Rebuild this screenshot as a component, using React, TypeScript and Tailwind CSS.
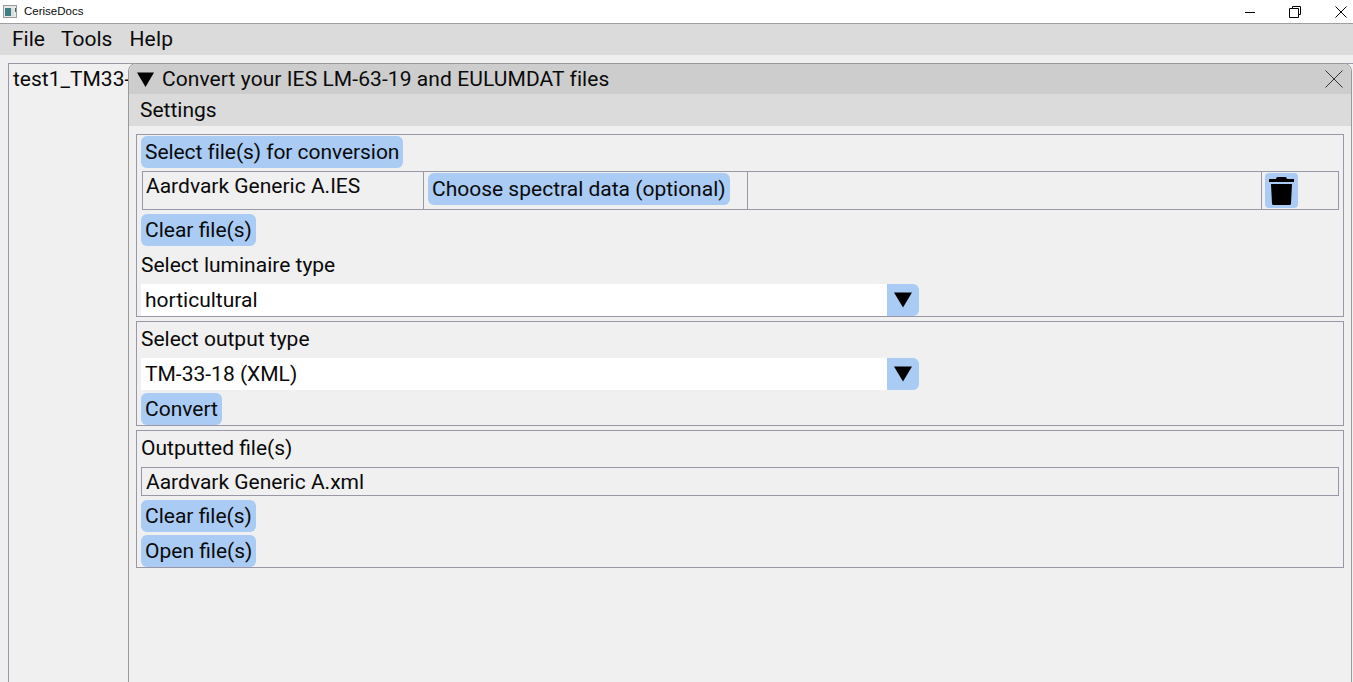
import React from 'react';

const BORDER = 'border border-[#9a98a8]';

function Btn({ children, className = '' }: { children: React.ReactNode; className?: string }) {
  return (
    <div className={`flex h-[32px] w-fit items-center rounded-[6px] bg-[#a9cbf4] px-[4px] whitespace-nowrap ${className}`}>
      {children}
    </div>
  );
}

function Combo({ value }: { value: string }) {
  return (
    <div className="flex h-[32px] w-[778px]">
      <div className="flex flex-1 items-center bg-white px-[4px]">{value}</div>
      <div className="flex w-[32px] items-center justify-center rounded-r-[6px] bg-[#a9cbf4]">
        <svg width="18" height="16" viewBox="0 0 18 16">
          <path d="M0 0.5H18L9 15.5Z" fill="#000" />
        </svg>
      </div>
    </div>
  );
}

function TrashIcon() {
  return (
    <svg width="25" height="28" viewBox="0 0 25 28">
      <path d="M7 2Q7 0 9 0H16Q18 0 18 2H25V5H0V2Z" fill="#000" />
      <path d="M2 7H23L22 26.500Q22 28 20.500 28H4.500Q3 28 3 26.500Z" fill="#000" />
    </svg>
  );
}

export default function App() {
  return (
    <div className="relative flex h-[682px] w-[1353px] flex-col overflow-hidden bg-[#efefef] font-['Roboto',sans-serif] text-[21px] leading-none text-[#0a0a0a]">
      {/* windows chrome */}
      <div className="flex h-[24px] shrink-0 items-center border-b border-[#a0a0a0] bg-white pl-[3px] font-['Liberation_Sans',sans-serif] text-[11.500px]">
        <svg width="14" height="13" viewBox="0 0 14 13" className="mr-[7px]">
          <rect x="0.500" y="0.500" width="13" height="12" fill="#e8e8e8" stroke="#9a9a9a" />
          <rect x="2" y="3" width="6" height="8" fill="#3f7d85" />
          <rect x="8" y="3" width="3" height="8" fill="#d5dfe0" />
          <rect x="12" y="3" width="1" height="4" fill="#555" />
        </svg>
        CeriseDocs
        <div className="ml-auto flex items-center">
          <svg width="12" height="12" viewBox="0 0 12 12" className="mr-[33px]">
            <path d="M1 6.500H11" stroke="#000" />
          </svg>
          <svg width="12" height="12" viewBox="0 0 12 12" className="mr-[34px]">
            <path d="M3.500 2.500V0.500H11.500V8.500H9.500M0.500 2.500H9.500V11.500H0.500Z" fill="none" stroke="#000" />
          </svg>
          <svg width="12" height="12" viewBox="0 0 12 12" className="mr-[6px]">
            <path d="M0.500 0.500L11.500 11.500M11.500 0.500L0.500 11.500" stroke="#000" />
          </svg>
        </div>
      </div>

      {/* main menu */}
      <div className="flex h-[31px] shrink-0 items-center gap-[16px] bg-[#dbdbdb] pl-[12px]">
        <span>File</span>
        <span>Tools</span>
        <span className="ml-[1px] tracking-[0.2px]">Help</span>
      </div>

      {/* doc panel behind the window */}
      <div className="ml-[8px] mt-[8px] flex-1 border-l border-t border-[#9a98a8] bg-[#f0f0f0] pl-[4px] pt-[5px]">
        test1_TM33-
      </div>

      {/* floating converter window */}
      <div className="absolute left-[128px] top-[63px] flex h-[640px] w-[1224px] flex-col rounded-t-[8px] border border-[#9a9a9a] bg-[#f0f0f0]">
        <div className="flex h-[30px] shrink-0 items-center rounded-t-[8px] bg-[#cdcdcd] pl-[8px]">
          <svg width="17" height="15" viewBox="0 0 17 15" className="mr-[8px]">
            <path d="M0 0.500H17L8.500 15Z" fill="#000" />
          </svg>
          <span className="tracking-[0.08px]">Convert your IES LM-63-19 and EULUMDAT files</span>
          <svg width="18" height="18" viewBox="0 0 18 18" className="ml-auto mr-[8px]">
            <path d="M0.500 0.500L17.500 17.500M17.500 0.500L0.500 17.500" stroke="#333" strokeWidth="1" />
          </svg>
        </div>
        <div className="flex h-[32px] shrink-0 items-center bg-[#dbdbdb] pl-[11px]">Settings</div>

        <div className="flex flex-col gap-[4px] px-[7px] pt-[8px]">
          {/* input section */}
          <div className={`flex h-[183px] w-[1208px] flex-col ${BORDER} pl-[4px] pt-[1px]`}>
            <Btn className="tracking-[-0.06px]">Select file(s) for conversion</Btn>
            <div className={`ml-[1px] mt-[3px] flex h-[39px] w-[1197px] ${BORDER}`}>
              <div className="w-[281px] border-r border-[#9a98a8] pl-[3px] pt-[4px]">Aardvark Generic A.IES</div>
              <div className="w-[324px] border-r border-[#9a98a8] pl-[4px] pt-[1px]">
                <Btn>Choose spectral data (optional)</Btn>
              </div>
              <div className="w-[514px] border-r border-[#9a98a8]" />
              <div className="pl-[3px] pt-[1px]">
                <div className="flex h-[35px] w-[33px] items-center justify-center rounded-[4px] bg-[#a9cbf4]">
                  <TrashIcon />
                </div>
              </div>
            </div>
            <Btn className="mt-[4px]">Clear file(s)</Btn>
            <div className="flex h-[38px] items-center">Select luminaire type</div>
            <Combo value="horticultural" />
          </div>

          {/* output type section */}
          <div className={`flex h-[105px] w-[1208px] flex-col ${BORDER} pl-[4px]`}>
            <div className="flex h-[36px] items-center pb-[1px]">Select output type</div>
            <Combo value="TM-33-18 (XML)" />
            <Btn className="mt-[3px]">Convert</Btn>
          </div>

          {/* results section */}
          <div className={`flex h-[138px] w-[1208px] flex-col ${BORDER} pl-[4px]`}>
            <div className="flex h-[36px] items-center pb-[1px]">Outputted file(s)</div>
            <div className={`flex h-[29px] w-[1198px] items-center ${BORDER} pl-[4px] pt-[1px]`}>Aardvark Generic A.xml</div>
            <Btn className="mt-[4px]">Clear file(s)</Btn>
            <Btn className="mt-[3px]">Open file(s)</Btn>
          </div>
        </div>
      </div>
    </div>
  );
}
